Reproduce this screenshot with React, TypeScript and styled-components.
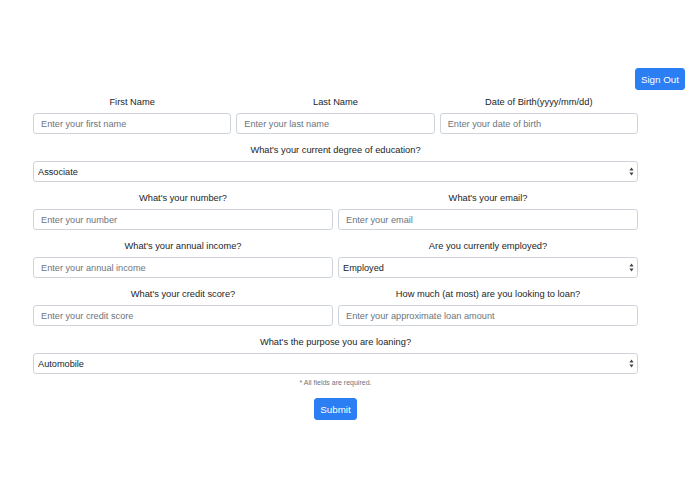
import React from 'react';
import styled, { createGlobalStyle } from 'styled-components';

const GlobalStyle = createGlobalStyle`
  body {
    margin: 0;
    background: #fff;
    font-family: "Liberation Sans", Arial, sans-serif;
    color: #212529;
  }
`;

const Page = styled.div`
  padding-top: 68px;
`;

const TopBar = styled.div`
  display: flex;
  justify-content: flex-end;
  padding-right: 10px;
`;

const Button = styled.button`
  height: 22px;
  padding: 0 5px;
  border: 1px solid #2b7ef4;
  border-radius: 3px;
  background: #2b7ef4;
  color: #fff;
  font-family: inherit;
  font-size: 9.8px;
  cursor: pointer;
`;

const Form = styled.form`
  width: 605px;
  margin: 5px 0 0 33px;
`;

const Row = styled.div<{ $cols: number }>`
  display: grid;
  grid-template-columns: repeat(${(p) => p.$cols}, 1fr);
  column-gap: 5px;
`;

const Group = styled.div`
  margin-bottom: 9px;
`;

const Label = styled.label`
  display: block;
  text-align: center;
  font-size: 9.3px;
  line-height: 14px;
  margin-bottom: 4px;
`;

const Input = styled.input`
  display: block;
  box-sizing: border-box;
  width: 100%;
  height: 21px;
  padding: 0 7px;
  border: 1px solid #ced4da;
  border-radius: 3px;
  font-family: inherit;
  font-size: 9.2px;
  color: #495057;
  &::placeholder {
    color: #6c757d;
  }
`;

const SelectWrap = styled.div`
  position: relative;
`;

const Select = styled.select`
  display: block;
  box-sizing: border-box;
  width: 100%;
  height: 21px;
  padding: 0 4px;
  border: 1px solid #ced4da;
  border-radius: 3px;
  background: #fff;
  appearance: none;
  font-family: inherit;
  font-size: 9.2px;
  color: #212529;
`;

const Arrows = styled.svg`
  position: absolute;
  right: 4px;
  top: 6px;
  pointer-events: none;
`;

const Note = styled.p`
  margin: -6px 0 0;
  text-align: center;
  font-size: 7px;
  line-height: 11px;
  color: #6c757d;
`;

const Actions = styled.div`
  display: flex;
  justify-content: center;
  margin-top: 10px;
`;

const Field = ({ label, placeholder }: { label: string; placeholder: string }) => (
  <Group>
    <Label>{label}</Label>
    <Input placeholder={placeholder} />
  </Group>
);

const Choice = ({ label, options }: { label: string; options: string[] }) => (
  <Group>
    <Label>{label}</Label>
    <SelectWrap>
      <Select defaultValue={options[0]}>
        {options.map((o) => (
          <option key={o}>{o}</option>
        ))}
      </Select>
      <Arrows width="5" height="9" viewBox="0 0 5 9">
        <path d="M2.5 0.5 L4.6 3.6 H0.4 Z M2.5 8.5 L4.6 5.4 H0.4 Z" fill="#444" />
      </Arrows>
    </SelectWrap>
  </Group>
);

export default function App() {
  return (
    <Page>
      <GlobalStyle />
      <TopBar>
        <Button type="button">Sign Out</Button>
      </TopBar>
      <Form onSubmit={(e) => e.preventDefault()}>
        <Row $cols={3}>
          <Field label="First Name" placeholder="Enter your first name" />
          <Field label="Last Name" placeholder="Enter your last name" />
          <Field label="Date of Birth(yyyy/mm/dd)" placeholder="Enter your date of birth" />
        </Row>
        <Choice
          label="What's your current degree of education?"
          options={['Associate', 'High School', 'Bachelor', 'Master', 'Doctorate']}
        />
        <Row $cols={2}>
          <Field label="What's your number?" placeholder="Enter your number" />
          <Field label="What's your email?" placeholder="Enter your email" />
        </Row>
        <Row $cols={2}>
          <Field label="What's your annual income?" placeholder="Enter your annual income" />
          <Choice label="Are you currently employed?" options={['Employed', 'Unemployed', 'Self-employed']} />
        </Row>
        <Row $cols={2}>
          <Field label="What's your credit score?" placeholder="Enter your credit score" />
          <Field
            label="How much (at most) are you looking to loan?"
            placeholder="Enter your approximate loan amount"
          />
        </Row>
        <Choice
          label="What's the purpose you are loaning?"
          options={['Automobile', 'Home', 'Education', 'Business', 'Other']}
        />
        <Note>* All fields are required.</Note>
        <Actions>
          <Button type="submit">Submit</Button>
        </Actions>
      </Form>
    </Page>
  );
}
